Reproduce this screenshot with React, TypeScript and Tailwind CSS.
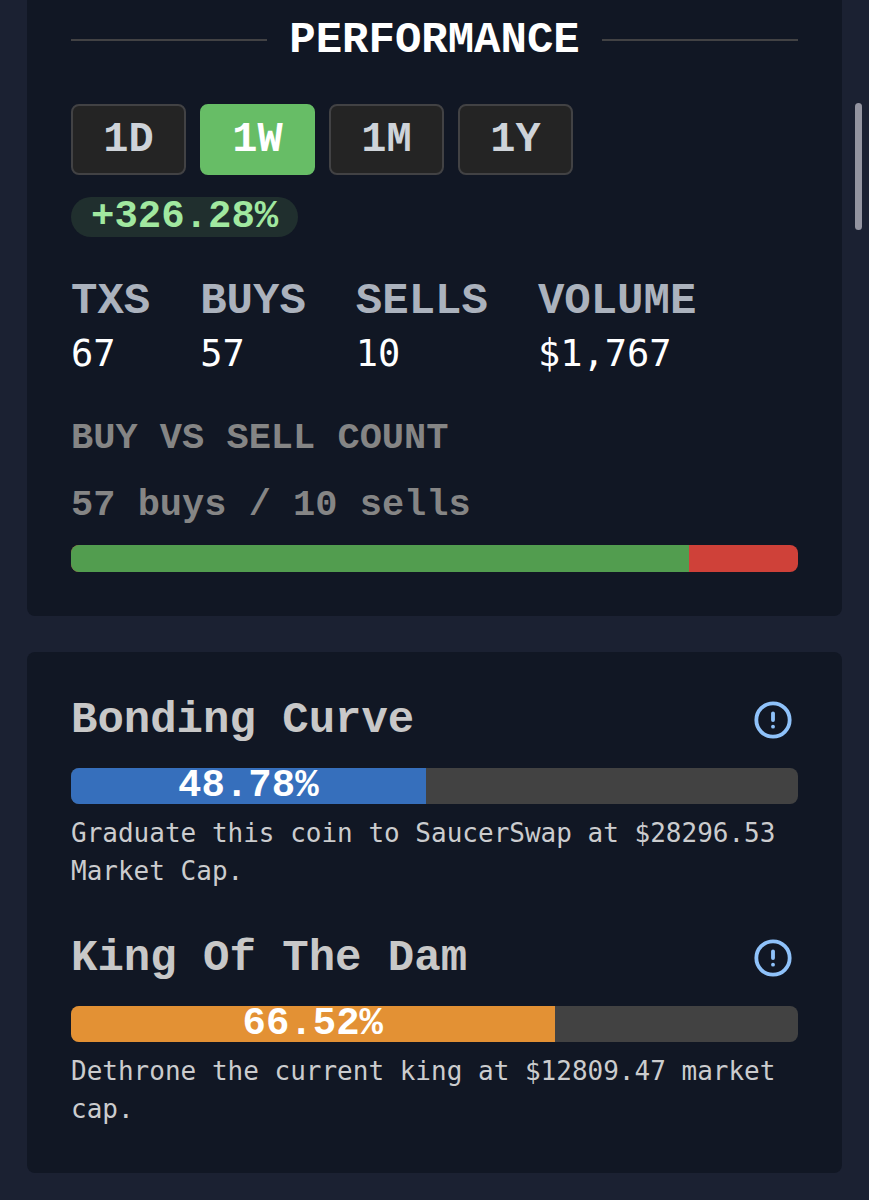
import { useState } from "react";
import { CircleAlert } from "lucide-react";

const ranges = ["1D", "1W", "1M", "1Y"];

const stats = [
  { label: "TXS", value: "67" },
  { label: "BUYS", value: "57" },
  { label: "SELLS", value: "10" },
  { label: "VOLUME", value: "$1,767" },
];

const goals = [
  {
    title: "Bonding Curve",
    percent: 48.78,
    color: "bg-[#366fbc]",
    text: "Graduate this coin to SaucerSwap at $28296.53 Market Cap.",
  },
  {
    title: "King Of The Dam",
    percent: 66.52,
    color: "bg-[#e39134]",
    text: "Dethrone the current king at $12809.47 market cap.",
  },
];

function Performance() {
  const [range, setRange] = useState("1W");
  const buys = 57;
  const sells = 10;

  return (
    <section className="bg-[#111724] rounded-b-lg px-11 pt-4 pb-11">
      <div className="flex items-center gap-[22px]">
        <div className="flex-1 h-[2px] bg-[#424244]" />
        <h2 className="text-[44px] leading-[48px] font-bold text-white">PERFORMANCE</h2>
        <div className="flex-1 h-[2px] bg-[#424244]" />
      </div>

      <div className="flex flex-wrap gap-[14px] mt-10">
        {ranges.map((r) => (
          <button
            key={r}
            type="button"
            onClick={() => setRange(r)}
            className={`w-[115px] h-[71px] rounded-lg border-2 text-[42px] leading-[48px] font-bold ${
              r === range
                ? "bg-[#67bd66] border-[#67bd66] text-white"
                : "bg-[#242424] border-[#424244] text-[#ced3d9]"
            }`}
          >
            {r}
          </button>
        ))}
      </div>

      <div className="flex mt-[22px]">
        <span className="rounded-full bg-[#202f2e] px-5 text-[39px] leading-[40px] font-bold text-[#a1e8a0]">
          +326.28%
        </span>
      </div>

      <dl className="flex flex-wrap gap-x-[50px] mt-[38px]">
        {stats.map((s) => (
          <div key={s.label}>
            <dt className="text-[44px] leading-[52px] font-bold text-[#abb2bd]">{s.label}</dt>
            <dd className="font-['DejaVu_Sans_Mono',monospace] text-[37px] leading-[54px] text-white">
              {s.value}
            </dd>
          </div>
        ))}
      </dl>

      <div className="mt-6 text-[37px] leading-[67px] font-bold text-[#858585]">
        <h3>BUY VS SELL COUNT</h3>
        <p>
          {buys} buys / {sells} sells
        </p>
      </div>
      <div className="flex h-[27px] mt-[6px] rounded-lg overflow-hidden bg-[#cf4139]">
        <div className="bg-[#529d4f]" style={{ width: `${(buys / (buys + sells)) * 100}%` }} />
      </div>
    </section>
  );
}

function Goals() {
  return (
    <section className="bg-[#111724] rounded-lg px-11 pt-11 pb-[45px] flex flex-col gap-11">
      {goals.map((g) => (
        <div key={g.title}>
          <div className="flex items-center justify-between">
            <h2 className="text-[44px] leading-[48px] font-bold text-[#c8c8c8]">{g.title}</h2>
            <button type="button" aria-label={`About ${g.title}`} className="mr-[5px] text-[#8fc2fa]">
              <CircleAlert size={40} strokeWidth={2.3} />
            </button>
          </div>
          <div className="h-9 mt-6 rounded-lg bg-[#424242]">
            <div
              className={`h-full rounded-l-lg text-center text-[39px] leading-[36px] font-bold text-white ${g.color}`}
              style={{ width: `${g.percent}%` }}
            >
              {g.percent}%
            </div>
          </div>
          <p className="mt-[10px] font-['DejaVu_Sans_Mono',monospace] text-[26px] leading-[38px] text-[#cbccce]">
            {g.text}
          </p>
        </div>
      ))}
    </section>
  );
}

export default function App() {
  return (
    <div className="min-h-screen bg-[#1b2132] font-['Liberation_Mono',monospace]">
      <main className="flex flex-col gap-9 px-[27px] pb-[27px]">
        <Performance />
        <Goals />
      </main>
      {/* scroll thumb */}
      <div className="fixed right-[7px] top-[103px] w-[7px] h-[127px] rounded-full bg-[#9394a0]" />
    </div>
  );
}
